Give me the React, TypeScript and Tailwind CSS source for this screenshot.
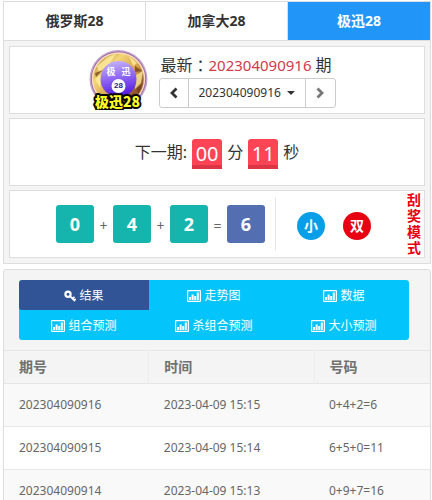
import React from "react";

const tabs = ["俄罗斯28", "加拿大28", "极迅28"];
const menu = ["结果", "走势图", "数据", "组合预测", "杀组合预测", "大小预测"];
const rows = [
  ["202304090916", "2023-04-09 15:15", "0+4+2=6"],
  ["202304090915", "2023-04-09 15:14", "6+5+0=11"],
  ["202304090914", "2023-04-09 15:13", "0+9+7=16"],
];

function ChartIcon() {
  return (
    <svg className="h-3 w-3.5 shrink-0" viewBox="0 0 14 12" fill="currentColor" aria-hidden="true">
      <path fillRule="evenodd" d="M1 0h12a1 1 0 0 1 1 1v10a1 1 0 0 1-1 1H1a1 1 0 0 1-1-1V1a1 1 0 0 1 1-1zM1.2 1.2v9.6h11.6V1.2z" />
      <path d="M2 7h2v3H2zM4.600 4.500h2V10h-2zM7.200 6h2v4h-2zM9.800 2.500h2V10h-2z" />
    </svg>
  );
}

function KeyIcon() {
  return (
    <svg className="h-3 w-3 shrink-0" viewBox="0 0 12 12" fill="none" stroke="currentColor" aria-hidden="true">
      <circle cx="4" cy="4.2" r="2.6" strokeWidth="2.200" />
      <path d="M6 6.2 11 11M8.200 9l2.200-2.200M9.800 10.800l2-2" strokeWidth="1.800" />
    </svg>
  );
}

function Chevron({ flip = false }: { flip?: boolean }) {
  return (
    <svg className="h-3 w-3" viewBox="0 0 12 12" fill="none" stroke="currentColor" strokeWidth="2.8" aria-hidden="true">
      <path d={flip ? "M3.5 1.5 8 6l-4.5 4.5" : "M8.5 1.5 4 6l4.5 4.5"} />
    </svg>
  );
}

function Logo() {
  return (
    <svg className="size-[60px] shrink-0" viewBox="0 0 60 60" role="img" aria-label="极迅28">
      <defs>
        <linearGradient id="ball" x1="0.4" y1="0" x2="0.6" y2="1">
          <stop offset="0" stopColor="#c3b0fb" />
          <stop offset="0.45" stopColor="#9068f4" />
          <stop offset="1" stopColor="#4f14dc" />
        </linearGradient>
        <linearGradient id="foil" x1="0" y1="0" x2="1" y2="1">
          <stop offset="0" stopColor="#a9782a" />
          <stop offset="0.3" stopColor="#f3d577" />
          <stop offset="0.55" stopColor="#d7a34c" />
          <stop offset="0.8" stopColor="#8b522d" />
          <stop offset="1" stopColor="#d99c3c" />
        </linearGradient>
      </defs>
      <circle cx="29.5" cy="29" r="29" fill="#c4a4cf" />
      <circle cx="29.5" cy="29" r="27.5" fill="#925a9c" />
      <circle cx="29.5" cy="29" r="26" fill="url(#foil)" stroke="#f9dcbc" strokeWidth="1.5" />
      <path d="M8 16 19 7l8-3-6 9-11 9zM40 6l8 7-4 3zM6 29l7-5-2 14zM47 25l7-4-2 12-6 6z" fill="#fff0a1" opacity=".75" />
      <path d="m6 23 8-3-7 7zM46 16l7 5-7 1zM48 38l5-3-4 9z" fill="#6b3816" opacity=".7" />
      <circle cx="29.5" cy="29" r="18" fill="url(#ball)" />
      <text x="22" y="25" textAnchor="middle" fontSize="9" fontWeight="700" fill="#fff">极</text>
      <text x="37" y="25" textAnchor="middle" fontSize="9" fontWeight="700" fill="#fff">迅</text>
      <circle cx="29.5" cy="36" r="7" fill="#fff" />
      <text x="29.5" y="38" textAnchor="middle" fontSize="8" fontWeight="700" fill="#35148a" fontFamily="Liberation Sans, sans-serif">28</text>
      <text x="28.5" y="57" textAnchor="middle" fontSize="14" fontWeight="900" fill="#ffff24" stroke="#080808" strokeWidth="4" strokeLinejoin="round" paintOrder="stroke" fontFamily="Noto Sans CJK SC, sans-serif">极迅28</text>
    </svg>
  );
}

function Ball({ value, total = false }: { value: number; total?: boolean }) {
  return (
    <span className={`flex size-[38px] items-center justify-center rounded-[3px] text-lg font-bold text-white ${total ? "bg-[#536fb2]" : "bg-[#15b5ad]"}`}>
      {value}
    </span>
  );
}

function Sign({ children }: { children: string }) {
  return <span className="w-[19px] pt-1 text-center text-sm text-[#666]">{children}</span>;
}

function Digits({ children }: { children: string }) {
  return (
    <span className="mt-1 flex size-[30px] items-center justify-center rounded-t-[3px] border-b-4 border-[#dc3545] bg-[#ff4455] pt-1 text-xl text-white">
      {children}
    </span>
  );
}

export default function App() {
  return (
    <div className="h-screen overflow-hidden bg-white pt-px pr-px pl-[3px] font-['Noto_Sans','Noto_Sans_CJK_SC',sans-serif] text-[#333]">
      <section className="border border-[#ddd] bg-[#f4f4f4]">
        <nav className="grid h-[39px] grid-cols-3 border-b border-[#ddd] bg-white">
          {tabs.map((tab, i) => (
            <button
              key={tab}
              type="button"
              className={`text-sm font-bold ${i === 2 ? "bg-[#2196f8] text-white" : "border-r border-[#ddd]"}`}
            >
              {tab}
            </button>
          ))}
        </nav>
        <div className="flex flex-col gap-1 p-[5px]">
          <div className="flex h-[68px] items-center justify-center gap-2.5 border border-[#ddd] bg-white pr-2.5">
            <Logo />
            <div>
              <p className="flex h-[26px] items-center pl-0.5 text-base">
                <span>最新</span>
                <span className="font-['Noto_Sans_CJK_TC',sans-serif]">：</span>
                <strong className="pr-1 text-[15px] font-normal text-[#d13b4c]">202304090916</strong>
                <span>期</span>
              </p>
              <div className="flex h-[30px] w-[177px] rounded-[3px] border border-[#ccc]">
                <button type="button" aria-label="上一期" className="flex w-[29px] items-center justify-center border-r border-[#ccc]">
                  <Chevron />
                </button>
                <div className="relative flex-1">
                  <select aria-label="期号" className="h-full w-full appearance-none bg-transparent pl-2.5 text-xs">
                    <option>202304090916</option>
                    <option>202304090915</option>
                    <option>202304090914</option>
                  </select>
                  <span className="pointer-events-none absolute top-3 right-2.5 border-x-4 border-t-4 border-x-transparent border-t-[#333]" />
                </div>
                <button type="button" aria-label="下一期" className="flex w-[30px] items-center justify-center border-l border-[#ccc] text-[#777]">
                  <Chevron flip />
                </button>
              </div>
            </div>
          </div>

          <div className="flex h-[68px] items-center justify-center gap-[5px] border border-[#ddd] bg-white text-base">
            <span>下一期:</span>
            <Digits>00</Digits>
            <span>分</span>
            <Digits>11</Digits>
            <span>秒</span>
          </div>

          <div className="flex h-[68px] items-center justify-between border border-[#ddd] bg-white pr-[3px] pl-[46px]">
            <div className="flex items-center">
              <Ball value={0} />
              <Sign>+</Sign>
              <Ball value={4} />
              <Sign>+</Sign>
              <Ball value={2} />
              <Sign>=</Sign>
              <Ball value={6} total />
            </div>
            <div className="mr-auto ml-2.5 flex h-[52px] items-center gap-[18px] border-l border-[#e5e5e5] pt-1 pl-[21px] text-sm font-bold text-white">
              <span className="flex size-7 items-center justify-center rounded-full bg-[#089fe8]">小</span>
              <span className="flex size-7 items-center justify-center rounded-full bg-[#e60012]">双</span>
            </div>
            <button type="button" className="w-3.5 text-sm leading-4 font-bold break-all text-[#e60012]">刮奖模式</button>
          </div>
        </div>
      </section>

      <section className="mt-[5px] rounded-t-[3px] border border-[#ddd] bg-[#f4f4f4]">
        <div className="py-2.5 pr-[21px] pl-[15px]">
          <div className="grid grid-cols-3 overflow-hidden rounded-[3px] bg-[#03c5fc]">
            {menu.map((item, i) => (
              <button
                key={item}
                type="button"
                className={`flex h-[30px] items-center justify-center gap-[3px] pt-px text-xs text-white ${i === 0 ? "rounded-l-[3px] bg-[#305496]" : ""}`}
              >
                {i === 0 ? <KeyIcon /> : <ChartIcon />}
                {item}
              </button>
            ))}
          </div>
        </div>
        <table className="w-full table-fixed border-collapse text-left text-[#666]">
          <colgroup>
            <col className="w-[34%]" />
            <col className="w-[39%]" />
            <col />
          </colgroup>
          <thead>
            <tr className="h-[33px] border-y border-[#e5e5e5] text-sm text-[#707070]">
              <th className="border-r border-[#eee] pl-[15px]">期号</th>
              <th className="border-r border-[#eee] pl-[15px]">时间</th>
              <th className="pl-3.5">号码</th>
            </tr>
          </thead>
          <tbody className="text-xs">
            {rows.map((row) => (
              <tr key={row[0]} className="h-[43px] border-b border-[#e8e8e8] odd:bg-[#f9f9f9] even:bg-white">
                {row.map((cell) => (
                  <td key={cell} className="pl-[15px] last:pl-3.5">{cell}</td>
                ))}
              </tr>
            ))}
          </tbody>
        </table>
      </section>
    </div>
  );
}
